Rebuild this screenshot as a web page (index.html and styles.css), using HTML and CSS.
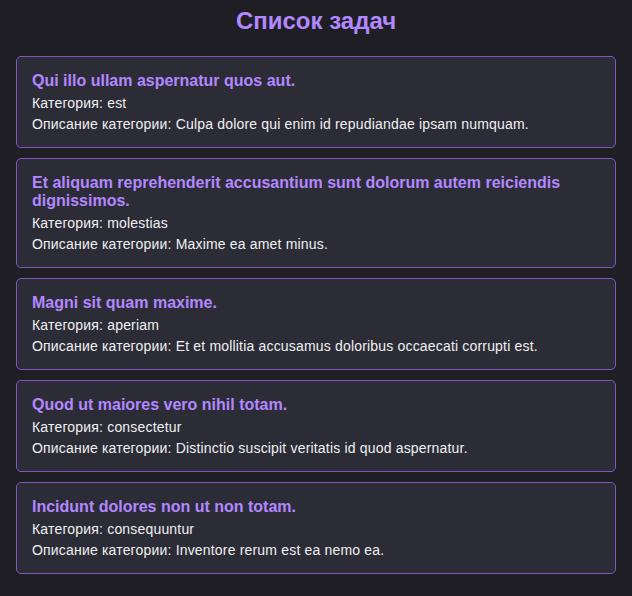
FILE: index.html
```html
<!DOCTYPE html>
<html lang="ru">
<head>
<meta charset="utf-8">
<title>Список задач</title>
<link rel="stylesheet" href="styles.css">
</head>
<body>
<main class="page">
  <h1 class="page-title">Список задач</h1>
  <ul class="task-list">
    <li class="task-card">
      <h3 class="task-title">Qui illo ullam aspernatur quos aut.</h3>
      <p class="task-meta">Категория: est</p>
      <p class="task-desc">Описание категории: Culpa dolore qui enim id repudiandae ipsam numquam.</p>
    </li>
    <li class="task-card">
      <h3 class="task-title">Et aliquam reprehenderit accusantium sunt dolorum autem reiciendis dignissimos.</h3>
      <p class="task-meta">Категория: molestias</p>
      <p class="task-desc">Описание категории: Maxime ea amet minus.</p>
    </li>
    <li class="task-card">
      <h3 class="task-title">Magni sit quam maxime.</h3>
      <p class="task-meta">Категория: aperiam</p>
      <p class="task-desc">Описание категории: Et et mollitia accusamus doloribus occaecati corrupti est.</p>
    </li>
    <li class="task-card">
      <h3 class="task-title">Quod ut maiores vero nihil totam.</h3>
      <p class="task-meta">Категория: consectetur</p>
      <p class="task-desc">Описание категории: Distinctio suscipit veritatis id quod aspernatur.</p>
    </li>
    <li class="task-card">
      <h3 class="task-title">Incidunt dolores non ut non totam.</h3>
      <p class="task-meta">Категория: consequuntur</p>
      <p class="task-desc">Описание категории: Inventore rerum est ea nemo ea.</p>
    </li>
  </ul>
</main>
</body>
</html>
```
FILE: styles.css
```css
html, body {
  margin: 0;
  padding: 0;
  background: #1e1e24;
}
body {
  font-family: "Liberation Sans", Arial, sans-serif;
  color: #f0f0f0;
}
.page {
  max-width: 600px;
  margin: 0 auto;
  padding-top: 7px;
}
.page-title {
  margin: 0 0 21px;
  text-align: center;
  font-size: 24px;
  font-weight: bold;
  color: #b388ff;
}
.task-list {
  list-style: none;
  margin: 0;
  padding: 0;
  display: flex;
  flex-direction: column;
  gap: 10px;
}
.task-card {
  background: #2c2c37;
  border: 1px solid #7e57c2;
  border-radius: 5px;
  padding: 15px 15px 15px;
}
.task-title {
  margin: 0 0 5px;
  font-size: 16px;
  font-weight: bold;
  color: #b388ff;
}
.task-meta {
  margin: 0 0 5px;
  font-size: 14px;
  letter-spacing: 0.18px;
}
.task-desc {
  margin: 0;
  font-size: 14px;
  letter-spacing: 0.18px;
}
```
